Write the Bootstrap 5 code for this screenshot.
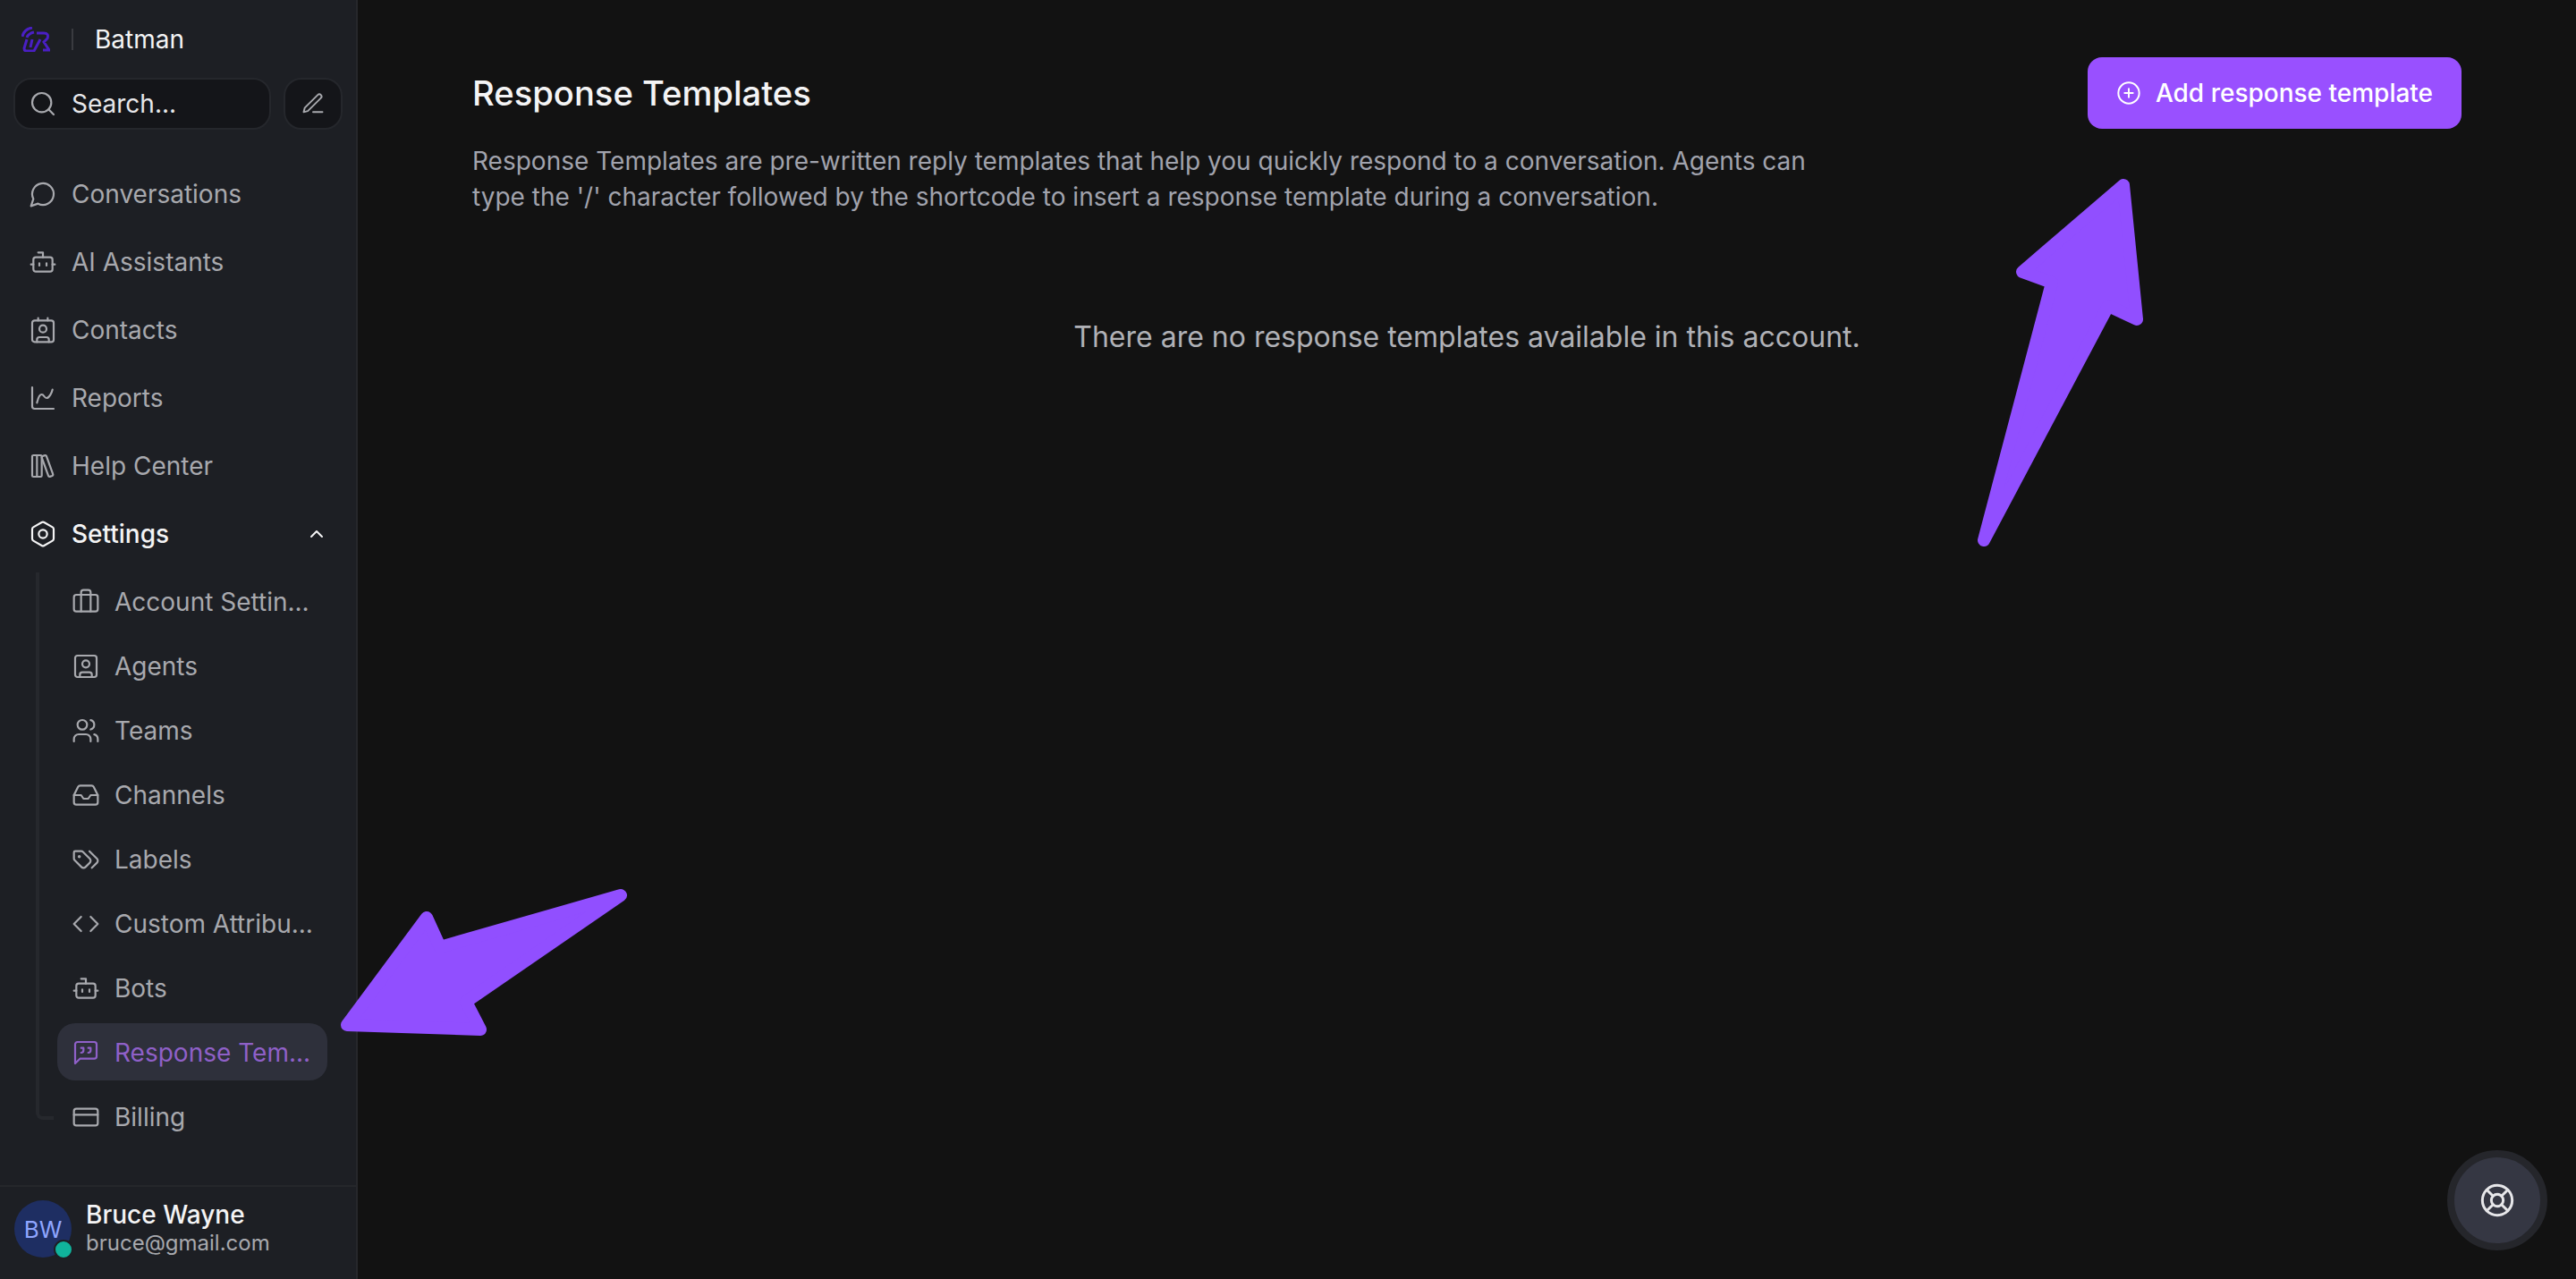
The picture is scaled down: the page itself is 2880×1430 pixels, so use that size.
<!DOCTYPE html>
<html lang="en">
<head>
<meta charset="UTF-8" />
<title>Response Templates</title>
<link rel="stylesheet" href="https://cdn.jsdelivr.net/npm/bootstrap@5.3.3/dist/css/bootstrap.min.css" />
<style>
  body { background: #121212; font-family: Inter, "Liberation Sans", sans-serif; color: #fff; height: 1430px; overflow: hidden; }
  svg.ico { width: 32px; height: 32px; flex: none; fill: none; stroke: currentColor; stroke-width: 1.65; stroke-linecap: round; stroke-linejoin: round; }
  .shell { height: 1430px; }
  .side { width: 400px; background: #1d1f24; border-right: 2px solid #26272b; }
  .brand-row { height: 87px; padding: 0 24px; font-size: 28px; color: #f4f4f5; }
  .brand-sep { width: 2px; height: 24px; background: #3a3b40; margin: 0 24px; }
  .search-row { padding: 0 15px; gap: 14px; margin-bottom: 33px; }
  .search-box { height: 58px; flex: 1; background: #141519; border: 2px solid #25272c; border-radius: 20px; padding: 0 15px; gap: 16px; font-size: 28px; color: #e7e7ea; }
  .search-box svg { color: #a8a9ae; }
  .compose { width: 66px; height: 58px; background: #141519; border: 2px solid #25272c; border-radius: 20px; color: #a8a9ae; }
  .compose svg.ico { width: 28px; height: 28px; }
  .menu-row { height: 76px; padding: 1px 36px 0 32px; gap: 16px; font-size: 28px; color: #a8a9ae; }
  .menu-row.is-open { color: #f4f4f5; font-weight: 500; }
  .sub-list { margin: 6px 0 0 40px; padding-left: 24px; position: relative; }
  .sub-list::before { content: ""; position: absolute; left: 0; top: 0; bottom: 36px; width: 20px; border-left: 4px solid #26282d; border-bottom: 4px solid #26282d; border-bottom-left-radius: 8px; }
  .sub-item { height: 64px; margin-bottom: 8px; margin-right: 32px; padding: 1px 16px 0; gap: 16px; font-size: 28px; color: #a8a9ae; border-radius: 20px; white-space: nowrap; }
  .sub-item.is-active { background: #2e303b; color: #8f60c8; }
  .user-row { border-top: 2px solid #25272b; height: 105px; padding: 15px 16px 0; gap: 16px; }
  .user-pic { width: 64px; height: 64px; background: #1e2e62; color: #8fa6ff; font-size: 26px; }
  .user-dot { width: 22px; height: 22px; background: #10b39c; border: 2px solid #1d1f24; right: -2px; bottom: -2px; }
  .user-name { font-size: 28px; line-height: 32px; color: #f4f4f5; font-weight: 500; }
  .user-mail { font-size: 24px; line-height: 32px; color: #a8a9ae; }
  .main-pane { padding: 64px 128px 0 128px; }
  .page-title { font-size: 38.2px; font-weight: 500; line-height: 80px; color: #f4f4f5; margin: 0; }
  .add-btn { height: 80px; width: 418px; background: #9950ff; border: 0; border-radius: 16px; color: #fff; font-size: 28px; font-weight: 500; gap: 16px; }
  .add-btn:hover { background: #9950ff; color: #fff; }
  .add-btn svg.ico { width: 28px; height: 28px; stroke-width: 1.7; }
  .page-desc { font-size: 28px; line-height: 40px; color: #a1a3ad; max-width: 1540px; margin: 0; padding-top: 16px; }
  .empty-msg { font-size: 32px; color: #b0b1b6; padding-top: 113px; }
  .arrow-layer { position: absolute; left: 0; top: 0; width: 2880px; height: 1430px; pointer-events: none; }
  .help-btn { position: absolute; left: 2736px; top: 1286px; width: 112px; height: 112px; background: #353743; border: 8px solid #25262b; color: #e7e7ea; }
  .help-btn svg.ico { width: 40px; height: 40px; stroke-width: 1.8; }
</style>
</head>
<body>
<div class="shell d-flex">
  <aside class="side d-flex flex-column flex-shrink-0">
    <div class="brand-row d-flex align-items-center">
      <svg width="32" height="28" viewBox="0 0 32 28" fill="none" stroke="#4a1fc4" stroke-width="3"><path d="M1 11C2 6 6 2 12 1M6 12C7 9 10 7 14 6M6 14 3 24Q3 27 6 27H14L21 14M12 14 10 23M17 7H25Q31 7 29 13L25 17 31 26H24"/></svg>
      <div class="brand-sep"></div>
      <div>Batman</div>
    </div>
    <div class="search-row d-flex">
      <div class="search-box d-flex align-items-center">
        <svg class="ico" viewBox="0 0 24 24"><circle cx="11" cy="11" r="8"/><path d="m21 21-4.300-4.300"/></svg>
        <span>Search...</span>
      </div>
      <div class="compose d-flex align-items-center justify-content-center">
        <svg class="ico" viewBox="0 0 24 24"><path d="M12 20h9"/><path d="M16.500 3.500a2.120 2.120 0 0 1 3 3L7 19l-4 1 1-4Z"/></svg>
      </div>
    </div>
    <div class="menu-row d-flex align-items-center"><svg class="ico" viewBox="0 0 24 24"><path d="M7.900 20A9 9 0 1 0 4 16.100L2 22Z"/></svg><span>Conversations</span></div>
    <div class="menu-row d-flex align-items-center"><svg class="ico" viewBox="0 0 24 24"><path d="M12 8V4H8"/><rect width="16" height="12" x="4" y="8" rx="2"/><path d="M2 14h2M20 14h2M15 13v2M9 13v2"/></svg><span>AI Assistants</span></div>
    <div class="menu-row d-flex align-items-center"><svg class="ico" viewBox="0 0 24 24"><path d="M16 2v2M8 2v2M7 22v-2a2 2 0 0 1 2-2h6a2 2 0 0 1 2 2v2"/><circle cx="12" cy="11" r="3"/><rect x="3" y="4" width="18" height="18" rx="2"/></svg><span>Contacts</span></div>
    <div class="menu-row d-flex align-items-center"><svg class="ico" viewBox="0 0 24 24"><path d="M3 3v16a2 2 0 0 0 2 2h16"/><path d="M7 16c.5-2 1.500-7 4-7 2 0 2 3 4 3 2.500 0 4.500-5 5-7"/></svg><span>Reports</span></div>
    <div class="menu-row d-flex align-items-center"><svg class="ico" viewBox="0 0 24 24"><rect x="3" y="3" width="8" height="18" rx="1"/><path d="M7 3v18"/><path d="M20.400 18.900c.2.5-.1 1.100-.6 1.300l-1.900.7c-.5.2-1.100-.1-1.300-.6L11.100 5.100c-.2-.5.1-1.100.6-1.300l1.900-.7c.5-.2 1.100.1 1.300.6Z"/></svg><span>Help Center</span></div>
    <div class="menu-row is-open d-flex align-items-center"><svg class="ico" viewBox="0 0 24 24"><path d="M21 16V8a2 2 0 0 0-1-1.730l-7-4a2 2 0 0 0-2 0l-7 4A2 2 0 0 0 3 8v8a2 2 0 0 0 1 1.730l7 4a2 2 0 0 0 2 0l7-4A2 2 0 0 0 21 16z"/><circle cx="12" cy="12" r="3.500"/></svg><span class="flex-grow-1">Settings</span><svg width="16" height="10" viewBox="0 0 16 10" fill="none" stroke="currentColor" stroke-width="2" stroke-linecap="round" stroke-linejoin="round"><path d="m2 8 6-6 6 6"/></svg></div>
    <div class="sub-list">
      <div class="sub-item d-flex align-items-center"><svg class="ico" viewBox="0 0 24 24"><path d="M16 20V4a2 2 0 0 0-2-2h-4a2 2 0 0 0-2 2v16"/><rect width="20" height="14" x="2" y="6" rx="2"/></svg><span>Account Settin...</span></div>
      <div class="sub-item d-flex align-items-center"><svg class="ico" viewBox="0 0 24 24"><rect x="3" y="3" width="18" height="18" rx="2"/><circle cx="12" cy="10" r="3"/><path d="M7 21v-2a2 2 0 0 1 2-2h6a2 2 0 0 1 2 2v2"/></svg><span>Agents</span></div>
      <div class="sub-item d-flex align-items-center"><svg class="ico" viewBox="0 0 24 24"><path d="M16 21v-2a4 4 0 0 0-4-4H6a4 4 0 0 0-4 4v2"/><circle cx="9" cy="7" r="4"/><path d="M22 21v-2a4 4 0 0 0-3-3.870"/><path d="M16 3.130a4 4 0 0 1 0 7.750"/></svg><span>Teams</span></div>
      <div class="sub-item d-flex align-items-center"><svg class="ico" viewBox="0 0 24 24"><path d="M22 12h-6l-2 3h-4l-2-3H2"/><path d="M5.450 5.110 2 12v6a2 2 0 0 0 2 2h16a2 2 0 0 0 2-2v-6l-3.450-6.890A2 2 0 0 0 16.760 4H7.240a2 2 0 0 0-1.790 1.110z"/></svg><span>Channels</span></div>
      <div class="sub-item d-flex align-items-center"><svg class="ico" viewBox="0 0 24 24"><path d="m15 5 6.300 6.300a2.400 2.400 0 0 1 0 3.400L17 19"/><path d="M9.586 5.586A2 2 0 0 0 8.172 5H3a1 1 0 0 0-1 1v5.172a2 2 0 0 0 .586 1.414L8.290 18.290a2.426 2.426 0 0 0 3.420 0l3.580-3.580a2.426 2.426 0 0 0 0-3.420z"/><circle cx="6.500" cy="9.500" r=".5" fill="currentColor"/></svg><span>Labels</span></div>
      <div class="sub-item d-flex align-items-center"><svg class="ico" viewBox="0 0 24 24"><path d="m16 18 6-6-6-6"/><path d="m8 6-6 6 6 6"/></svg><span>Custom Attribu...</span></div>
      <div class="sub-item d-flex align-items-center"><svg class="ico" viewBox="0 0 24 24"><path d="M12 8V4H8"/><rect width="16" height="12" x="4" y="8" rx="2"/><path d="M2 14h2M20 14h2M15 13v2M9 13v2"/></svg><span>Bots</span></div>
      <div class="sub-item is-active d-flex align-items-center"><svg class="ico" viewBox="0 0 24 24"><path d="M21 15a2 2 0 0 1-2 2H7l-4 4V5a2 2 0 0 1 2-2h14a2 2 0 0 1 2 2z"/><path d="M8 12a2 2 0 0 0 2-2V8H8"/><path d="M14 12a2 2 0 0 0 2-2V8h-2"/></svg><span>Response Tem...</span></div>
      <div class="sub-item d-flex align-items-center"><svg class="ico" viewBox="0 0 24 24"><rect width="20" height="14" x="2" y="5" rx="2"/><path d="M2 10h20"/></svg><span>Billing</span></div>
    </div>
    <div class="user-row d-flex align-items-start mt-auto">
      <div class="user-pic rounded-circle position-relative d-flex align-items-center justify-content-center flex-shrink-0">BW<span class="user-dot rounded-circle position-absolute"></span></div>
      <div><div class="user-name">Bruce Wayne</div><div class="user-mail">bruce@gmail.com</div></div>
    </div>
  </aside>
  <main class="main-pane flex-grow-1">
    <div class="d-flex justify-content-between align-items-center">
      <h1 class="page-title">Response Templates</h1>
      <button class="add-btn btn d-flex align-items-center justify-content-center"><svg class="ico" viewBox="0 0 24 24"><circle cx="12" cy="12" r="10"/><path d="M8 12h8M12 8v8"/></svg>Add response template</button>
    </div>
    <p class="page-desc">Response Templates are pre-written reply templates that help you quickly respond to a conversation. Agents can type the '/' character followed by the shortcode to insert a response template during a conversation.</p>
    <div class="empty-msg text-center">There are no response templates available in this account.</div>
  </main>
</div>
<!-- annotation arrows drawn over the screenshot -->
<svg class="arrow-layer" viewBox="0 0 2880 1430" fill="#914fff" stroke="#914fff" stroke-width="14" stroke-linejoin="round">
  <path d="M2374 207 2261 304 2294 316 2218 604 2357 342 2389 357Z"/>
  <path d="M388 1146 477 1026 492 1059 694 1001 521 1120 537 1151Z"/>
</svg>
<div class="help-btn rounded-circle d-flex align-items-center justify-content-center">
  <svg class="ico" viewBox="0 0 24 24"><circle cx="12" cy="12" r="10"/><circle cx="12" cy="12" r="4"/><path d="m4.930 4.930 4.240 4.240M14.830 9.170l4.240-4.240M14.830 14.830l4.240 4.240M9.170 14.830l-4.240 4.240"/></svg>
</div>
</body>
</html>
